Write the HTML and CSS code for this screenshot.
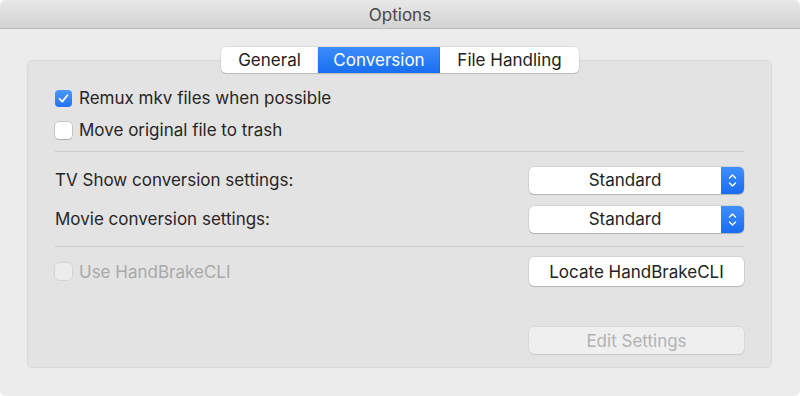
FILE: index.html
```html
<!DOCTYPE html>
<html lang="en">
<head>
  <meta charset="UTF-8">
  <title>Options</title>
  <link rel="stylesheet" href="styles.css">
</head>
<body>
  <div class="window">
    <div class="titlebar">Options</div>

    <div class="content">
      <div class="tabs">
        <div class="tab tab-general">General</div>
        <div class="tab tab-conversion active">Conversion</div>
        <div class="tab tab-files">File Handling</div>
      </div>

      <div class="group">
        <label class="check-row first">
          <span class="checkbox checked">
            <svg viewBox="0 0 17 17" width="17" height="17"><path d="M4.6 8.9 L7.3 11.6 L12.4 5.2" fill="none" stroke="#fff" stroke-width="1.8" stroke-linecap="round" stroke-linejoin="round"/></svg>
          </span>
          Remux mkv files when possible
        </label>
        <label class="check-row">
          <span class="checkbox"></span>
          Move original file to trash
        </label>

        <div class="separator"></div>

        <div class="field-row tv">
          <span class="label">TV Show conversion settings:</span>
          <div class="popup">
            <span class="popup-value">Standard</span>
            <span class="popup-arrows">
              <svg viewBox="0 0 23 27" width="23" height="27"><path d="M8.5 11 L11.5 8 L14.5 11 M8.5 16 L11.5 19 L14.5 16" fill="none" stroke="#fff" stroke-width="1.4" stroke-linecap="round" stroke-linejoin="round"/></svg>
            </span>
          </div>
        </div>
        <div class="field-row movie">
          <span class="label">Movie conversion settings:</span>
          <div class="popup">
            <span class="popup-value">Standard</span>
            <span class="popup-arrows">
              <svg viewBox="0 0 23 27" width="23" height="27"><path d="M8.5 11 L11.5 8 L14.5 11 M8.5 16 L11.5 19 L14.5 16" fill="none" stroke="#fff" stroke-width="1.4" stroke-linecap="round" stroke-linejoin="round"/></svg>
            </span>
          </div>
        </div>

        <div class="separator second"></div>

        <div class="field-row cli">
          <label class="check-row disabled">
            <span class="checkbox"></span>
            Use HandBrakeCLI
          </label>
          <button class="push-btn">Locate HandBrakeCLI</button>
        </div>

        <div class="field-row edit">
          <button class="push-btn" disabled>Edit Settings</button>
        </div>
      </div>
    </div>
  </div>
</body>
</html>
```

FILE: styles.css
```css
html, body {
  margin: 0;
  padding: 0;
  background: #ffffff;
}

body {
  font-family: 'Inter', 'Roboto', sans-serif;
  font-size: 17px;
  color: #262626;
}

.window {
  width: 800px;
  height: 396px;
  background: #ececec;
  border-radius: 6px;
  overflow: hidden;
}

.titlebar {
  height: 29px;
  line-height: 31px;
  text-align: center;
  font-size: 17px;
  color: #474747;
  background: linear-gradient(#e8e8e8, #d3d3d3);
  border-bottom: 1px solid #b9b9b9;
  box-sizing: border-box;
}

.content {
  padding: 18px 28px 0 27px;
}

/* segmented control */
.tabs {
  display: flex;
  justify-content: center;
  position: relative;
  z-index: 2;
  height: 26px;
  margin-left: 1px;
}

.tab {
  display: flex;
  align-items: center;
  justify-content: center;
  height: 26px;
  background: #fff;
  color: #222;
  box-shadow: 0 0 0 0.5px rgba(0, 0, 0, 0.12), 0 1px 1px rgba(0, 0, 0, 0.12);
}

.tab-general {
  width: 97px;
  border-radius: 5px 0 0 5px;
}

.tab-conversion {
  width: 122px;
}

.tab-files {
  width: 139px;
  border-radius: 0 5px 5px 0;
}

.tab.active {
  background: linear-gradient(#3b8cfb, #1a6ef0);
  color: #fff;
}

/* group box */
.group {
  margin-top: -13px;
  height: 308px;
  box-sizing: border-box;
  background: #e3e3e3;
  border: 1px solid #d9d9d9;
  border-radius: 5px;
  padding: 21px 27px 0 27px;
}

.check-row {
  display: flex;
  align-items: center;
  gap: 7px;
  height: 32px;
}

.checkbox {
  width: 17px;
  height: 17px;
  box-sizing: border-box;
  border-radius: 4px;
  background: #fff;
  box-shadow: 0 0 0 0.5px rgba(0, 0, 0, 0.25), 0 1px 1px rgba(0, 0, 0, 0.12);
  display: flex;
}

.checkbox.checked {
  background: linear-gradient(#4b97fb, #2174f2);
  box-shadow: none;
}

.separator {
  height: 1px;
  background: #c9c9c9;
  margin-top: 5px;
}

.separator.second {
  margin-top: 13px;
}

.field-row {
  display: flex;
  align-items: center;
  justify-content: space-between;
}

.field-row.tv {
  margin-top: 14px;
  height: 28px;
}

.field-row.movie {
  margin-top: 11px;
  height: 28px;
}

.field-row.cli {
  margin-top: 10px;
  height: 29px;
}

.field-row.edit {
  margin-top: 41px;
  height: 27px;
  justify-content: flex-end;
}

.popup {
  width: 215px;
  height: 27px;
  display: flex;
  background: #fff;
  border-radius: 5px;
  box-shadow: 0 0 0 0.5px rgba(0, 0, 0, 0.15), 0 1px 1px rgba(0, 0, 0, 0.15);
  overflow: hidden;
}

.popup-value {
  flex: 1;
  text-align: center;
  line-height: 27px;
  color: #222;
}

.popup-arrows {
  width: 23px;
  background: linear-gradient(#3f8ffb, #1a6cf0);
  display: flex;
}

.push-btn {
  width: 215px;
  height: 29px;
  font-family: inherit;
  font-size: 17px;
  color: #222;
  background: #fff;
  border: none;
  border-radius: 5px;
  box-shadow: 0 0 0 0.5px rgba(0, 0, 0, 0.15), 0 1px 1px rgba(0, 0, 0, 0.15);
  padding: 0;
}

.push-btn:disabled {
  height: 27px;
  background: #efefef;
  color: #b2b2b2;
  box-shadow: 0 0 0 0.5px rgba(0, 0, 0, 0.08), 0 1px 1px rgba(0, 0, 0, 0.08);
}

.check-row.disabled {
  color: #a9a9a9;
}

.check-row.disabled .checkbox {
  background: #ececec;
  box-shadow: 0 0 0 0.5px rgba(0, 0, 0, 0.12);
}
```
